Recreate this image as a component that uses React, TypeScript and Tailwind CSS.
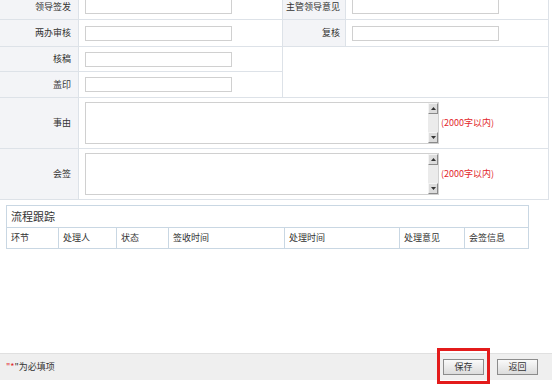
import React from "react";

const labelCls =
  "flex items-center justify-end bg-[#f3f4f7] border-r border-b border-[#dde2e8] whitespace-nowrap";

function TextInput() {
  return <input className="h-[15px] w-[147px] border border-[#d0d0d0] bg-white outline-none" />;
}

function ScrollBtn({ up }: { up?: boolean }) {
  return (
    <div className="flex h-[11px] items-center justify-center border border-t-[#f4f4f4] border-l-[#f4f4f4] border-r-[#8a8a8a] border-b-[#8a8a8a] bg-[#dcdcdc]">
      <svg width="5" height="3" viewBox="0 0 5 3">
        {up ? <path d="M2.5 0 L5 3 L0 3 Z" fill="#333" /> : <path d="M0 0 L5 0 L2.5 3 Z" fill="#333" />}
      </svg>
    </div>
  );
}

function Memo() {
  return (
    <div className="flex items-center">
      <div className="flex h-[42px] w-[354px] border border-[#d0d0d0] bg-white">
        <textarea className="flex-1 resize-none overflow-hidden outline-none" />
        <div className="flex w-[10px] flex-col">
          <ScrollBtn up />
          <div className="flex-1 bg-[#ebebeb]" />
          <ScrollBtn />
        </div>
      </div>
      <span className="ml-[2px] text-[#e2262b]">(2000字以内)</span>
    </div>
  );
}

const flowCols = [
  { t: "环节", w: "w-[51px]" },
  { t: "处理人", w: "w-[58px]" },
  { t: "状态", w: "w-[52px]" },
  { t: "签收时间", w: "w-[116px]" },
  { t: "处理时间", w: "w-[115px]" },
  { t: "处理意见", w: "w-[65px]" },
  { t: "会签信息", w: "w-[64px]" },
];

export default function App() {
  return (
    <div className="relative flex h-[386px] w-[552px] flex-col overflow-hidden bg-white font-['Noto_Sans_CJK_SC',sans-serif] text-[9px] text-[#333]">
      {/* 表单 */}
      <div className="mt-[-6px] grid w-[549px] grid-cols-[79px_203px_64px_203px] grid-rows-[26px_27px_25px_26px_51px_51px] border-r border-[#dde2e8]">
        <div className={labelCls + " pr-[7px]"}>领导签发</div>
        <div className="flex items-center border-b border-[#dde2e8] pl-[6px]">
          <TextInput />
        </div>
        <div className={labelCls + " border-l pr-[5px]"}>主管领导意见</div>
        <div className="flex items-center border-b border-[#dde2e8] pl-[6px]">
          <TextInput />
        </div>

        <div className={labelCls + " pr-[7px]"}>两办审核</div>
        <div className="flex items-center border-b border-[#dde2e8] pl-[6px]">
          <TextInput />
        </div>
        <div className={labelCls + " border-l pr-[5px]"}>复核</div>
        <div className="flex items-center border-b border-[#dde2e8] pl-[6px]">
          <TextInput />
        </div>

        <div className={labelCls + " pr-[7px]"}>核稿</div>
        <div className="flex items-center border-b border-[#dde2e8] pl-[6px]">
          <TextInput />
        </div>
        <div className="col-span-2 row-span-2 border-b border-l border-[#dde2e8]" />

        <div className={labelCls + " pr-[7px]"}>盖印</div>
        <div className="flex items-center border-b border-[#dde2e8] pl-[6px]">
          <TextInput />
        </div>

        <div className={labelCls + " pr-[7px]"}>事由</div>
        <div className="col-span-3 flex items-center border-b border-[#dde2e8] pl-[6px]">
          <Memo />
        </div>

        <div className={labelCls + " pr-[7px]"}>会签</div>
        <div className="col-span-3 flex items-center border-b border-[#dde2e8] pl-[6px]">
          <Memo />
        </div>
      </div>

      {/* 流程跟踪 */}
      <div className="ml-[6px] mt-[5px] w-[523px] border border-[#c9d7e3]">
        <div className="flex h-[22px] items-center border-b border-[#c9d7e3] pl-[4px] text-[11px]">流程跟踪</div>
        <div className="flex h-[20px]">
          {flowCols.map((c, i) => (
            <div
              key={c.t}
              className={c.w + " flex items-center pl-[4px]" + (i > 0 ? " border-l border-[#c9d7e3]" : "")}
            >
              {c.t}
            </div>
          ))}
        </div>
      </div>

      {/* 底部 */}
      <div className="mb-[6px] mt-auto flex h-[27px] items-center justify-between border-t border-[#e0e0e0] bg-[#efefef] pl-[6px] pr-[14px]">
        <div>
          <span className="text-[#e2262b]">"*</span>"为必填项
        </div>
        <div className="flex gap-[13px]">
          <button className="h-[16px] w-[41px] border border-[#8c8c8c] bg-gradient-to-b from-[#fafafa] to-[#dcdcdc] text-[9px] text-[#333]">
            保存
          </button>
          <button className="h-[16px] w-[41px] border border-[#8c8c8c] bg-gradient-to-b from-[#fafafa] to-[#dcdcdc] text-[9px] text-[#333]">
            返回
          </button>
        </div>
      </div>

      <div className="absolute left-[437px] top-[348px] h-[36px] w-[53px] border-[3px] border-[#e31b1b]" />
    </div>
  );
}
